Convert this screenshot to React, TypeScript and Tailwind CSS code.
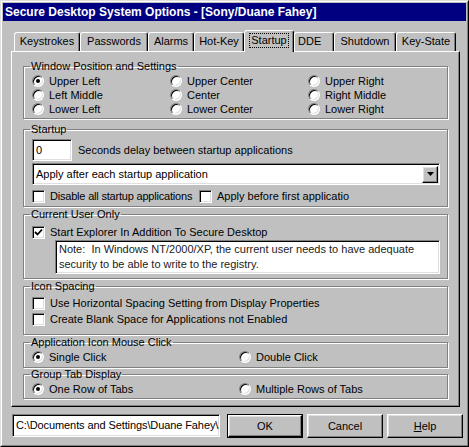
import type { ReactNode } from "react";

const sunken =
  "border border-t-[#808080] border-l-[#808080] border-b-white border-r-white shadow-[inset_1px_1px_0_#000,inset_-1px_-1px_0_#dfdfdf]";
const raised =
  "border border-t-white border-l-white border-r-black border-b-black shadow-[inset_-1px_-1px_0_#808080,inset_1px_1px_0_#dfdfdf]";

function Radio({ checked = false }: { checked?: boolean }) {
  return (
    <span
      className={`flex size-[12px] shrink-0 items-center justify-center rounded-full bg-white ${sunken}`}
    >
      {checked && <span className="size-[4px] rounded-full bg-black" />}
    </span>
  );
}

function Check({ checked = false }: { checked?: boolean }) {
  return (
    <span className={`flex size-[13px] shrink-0 items-center justify-center bg-white ${sunken}`}>
      {checked && (
        <svg width="9" height="9" viewBox="0 0 9 9">
          <path d="M1 4 L3.5 6.5 L8 1.5" fill="none" stroke="#000" strokeWidth="1.8" />
        </svg>
      )}
    </span>
  );
}

function Option({
  kind,
  checked,
  label,
  tight,
}: {
  kind: "radio" | "check";
  checked?: boolean;
  label: string;
  tight?: boolean;
}) {
  return (
    <div className="flex h-[14px] items-center gap-[5px] whitespace-nowrap">
      {kind === "radio" ? <Radio checked={checked} /> : <Check checked={checked} />}
      <span className={tight ? "tracking-[-0.2px]" : ""}>{label}</span>
    </div>
  );
}

function Group({ title, className, children }: { title: string; className: string; children: ReactNode }) {
  return (
    <fieldset
      className={`w-[425px] border border-[#808080] shadow-[1px_1px_0_#fff,inset_1px_1px_0_#fff] ${className}`}
    >
      <legend className="ml-[6px] px-[1px] leading-[12px]">{title}</legend>
      {children}
    </fieldset>
  );
}

const tabs = [
  { label: "Keystrokes", w: "w-[66px]" },
  { label: "Passwords", w: "w-[68px]" },
  { label: "Alarms", w: "w-[46px]" },
  { label: "Hot-Key", w: "w-[50px]" },
  { label: "Startup", w: "w-[50px]", active: true },
  { label: "DDE", w: "w-[40px]", left: true },
  { label: "Shutdown", w: "w-[62px]" },
  { label: "Key-State", w: "w-[60px]" },
];

export default function App() {
  return (
    <div className="h-[447px] w-[469px] border border-t-[#dfdfdf] border-l-[#dfdfdf] border-r-black border-b-black bg-[#c0c0c0] font-['Liberation_Sans',Arial,sans-serif] text-[11px] leading-[13px] text-black">
      <div className="flex h-full w-full flex-col border border-t-white border-l-white border-r-[#808080] border-b-[#808080] p-px">
        <div className="flex h-[18px] items-center bg-[#000080] pl-[2px] text-[12px] font-bold text-white">
          Secure Desktop System Options - [Sony/Duane Fahey]
        </div>

        <div className="mt-[9px] flex h-[21px] items-end pl-[11px]">
          {tabs.map((t) =>
            t.active ? (
              <div
                key={t.label}
                className={`relative z-10 -mb-px flex h-[22px] ${t.w} items-start justify-center rounded-t-[3px] border border-b-0 border-t-white border-l-white border-r-black bg-[#c0c0c0] pt-[2px] shadow-[inset_-1px_0_0_#808080]`}
              >
                <span className="border border-dotted border-black px-[1px] leading-[13px]">{t.label}</span>
              </div>
            ) : (
              <div
                key={t.label}
                className={`flex h-[19px] ${t.w} items-center ${t.left ? "justify-start pl-[3px]" : "justify-center"} rounded-t-[3px] border border-b-0 border-t-white border-l-white border-r-black pb-[1px] shadow-[inset_-1px_0_0_#808080]`}
              >
                {t.label}
              </div>
            )
          )}
        </div>

        <div className="ml-[8px] flex h-[356px] w-[449px] flex-col border border-t-white border-l-white border-r-black border-b-black pl-[11px] pt-[8px] shadow-[inset_-1px_-1px_0_#808080]">
          <Group title="Window Position and Settings" className="h-[59px]">
            <div className="grid grid-cols-[138px_138px_1fr] pl-[8px] pt-[2px]">
              <Option kind="radio" checked label="Upper Left" />
              <Option kind="radio" label="Upper Center" />
              <Option kind="radio" label="Upper Right" />
              <Option kind="radio" label="Left Middle" />
              <Option kind="radio" label="Center" />
              <Option kind="radio" label="Right Middle" />
              <Option kind="radio" label="Lower Left" />
              <Option kind="radio" label="Lower Center" />
              <Option kind="radio" label="Lower Right" />
            </div>
          </Group>

          <Group title="Startup" className="mt-[4px] h-[84px]">
            <div className="flex flex-col pl-[8px] pt-[4px]">
              <div className="flex items-center gap-[6px]">
                <div className={`flex h-[22px] w-[40px] items-center bg-white pl-[3px] ${sunken}`}>0</div>
                <span>Seconds delay between startup applications</span>
              </div>
              <div className={`mt-[2px] flex h-[22px] w-[408px] items-center justify-between bg-white pl-[3px] pr-[1px] ${sunken}`}>
                <span>Apply after each startup application</span>
                <span className={`flex h-[17px] w-[16px] items-center justify-center bg-[#c0c0c0] ${raised}`}>
                  <svg width="7" height="4" viewBox="0 0 7 4">
                    <path d="M0 0 H7 L3.5 4 Z" fill="#000" />
                  </svg>
                </span>
              </div>
              <div className="mt-[4px] flex items-center">
                <div className="w-[167px] overflow-hidden">
                  <Option kind="check" tight label="Disable all startup applications" />
                </div>
                <div className="w-[153px] overflow-hidden">
                  <Option kind="check" label="Apply before first applicatio" />
                </div>
              </div>
            </div>
          </Group>

          <Group title="Current User Only" className="mt-px h-[71px]">
            <div className="flex flex-col pl-[8px] pt-[5px]">
              <Option kind="check" checked label="Start Explorer In Addition To Secure Desktop" />
              <div className={`ml-[23px] mt-[1px] h-[34px] w-[385px] bg-white pl-[3px] pt-[1px] leading-[15px] text-[#222] ${sunken}`}>
                Note:&nbsp; In Windows NT/2000/XP, the current user needs to have adequate
                <br />
                security to be able to write to the registry.
              </div>
            </div>
          </Group>

          <Group title="Icon Spacing" className="mt-px h-[55px]">
            <div className="flex flex-col gap-[2px] pl-[8px] pt-[4px]">
              <Option kind="check" label="Use Horizontal Spacing Setting from Display Properties" />
              <Option kind="check" label="Create Blank Space for Applications not Enabled" />
            </div>
          </Group>

          <Group title="Application Icon Mouse Click" className="mt-px h-[32px]">
            <div className="grid grid-cols-[207px_1fr] pl-[8px] pt-[2px]">
              <Option kind="radio" checked label="Single Click" />
              <Option kind="radio" label="Double Click" />
            </div>
          </Group>

          <Group title="Group Tab Display" className="h-[31px]">
            <div className="grid grid-cols-[207px_1fr] pl-[8px] pt-[2px]">
              <Option kind="radio" checked label="One Row of Tabs" />
              <Option kind="radio" label="Multiple Rows of Tabs" />
            </div>
          </Group>
        </div>

        <div className="mt-[7px] flex items-start pl-[9px]">
          <div className={`flex h-[23px] w-[208px] items-center overflow-hidden whitespace-nowrap bg-white pl-[3px] ${sunken}`}>
            <span className="tracking-[-0.1px]">C:\Documents and Settings\Duane Fahey\S</span>
          </div>
          <div className="ml-[7px] h-[24px] w-[76px] border border-black">
            <div className={`flex h-full w-full items-center justify-center ${raised}`}>OK</div>
          </div>
          <div className={`ml-[4px] flex h-[24px] w-[76px] items-center justify-center ${raised}`}>Cancel</div>
          <div className={`ml-[4px] flex h-[24px] w-[76px] items-center justify-center ${raised}`}>
            <span>
              <span className="underline">H</span>elp
            </span>
          </div>
        </div>
      </div>
    </div>
  );
}
